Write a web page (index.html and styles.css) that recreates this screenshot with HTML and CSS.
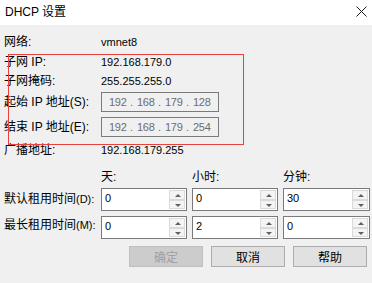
FILE: index.html
```html
<!DOCTYPE html>
<html lang="zh-CN">
<head>
<meta charset="utf-8">
<title>DHCP 设置</title>
<link rel="stylesheet" href="styles.css">
</head>
<body>
<div class="dialog">
  <div class="titlebar">
    <span class="title">DHCP 设置</span>
    <svg class="close" width="11" height="11" viewBox="0 0 11 11"><path d="M0.5 0.5 L10.5 10.5 M10.5 0.5 L0.5 10.5" stroke="#1a1a1a" stroke-width="1" fill="none"/></svg>
  </div>
  <div class="content">
    <div class="row r-net"><span class="label">网络:</span><span class="value">vmnet8</span></div>
    <div class="row r-ip"><span class="label">子网 IP:</span><span class="value">192.168.179.0</span></div>
    <div class="row r-mask"><span class="label">子网掩码:</span><span class="value">255.255.255.0</span></div>
    <div class="row r-start"><span class="label">起始 IP 地址(S):</span>
      <div class="ipbox"><span class="seg">192</span><span class="dot">.</span><span class="seg">168</span><span class="dot">.</span><span class="seg">179</span><span class="dot">.</span><span class="seg">128</span></div>
    </div>
    <div class="row r-end"><span class="label">结束 IP 地址(E):</span>
      <div class="ipbox"><span class="seg">192</span><span class="dot">.</span><span class="seg">168</span><span class="dot">.</span><span class="seg">179</span><span class="dot">.</span><span class="seg">254</span></div>
    </div>
    <div class="row r-bc"><span class="label">广播地址:</span><span class="value">192.168.179.255</span></div>

    <div class="lease">
      <span></span><span class="colhead">天:</span><span class="colhead">小时:</span><span class="colhead">分钟:</span>

      <span class="llabel">默认租用时间<span class="acc">(D):</span></span>
      <div class="spin"><span class="num">0</span><div class="arrows"><span class="up"></span><span class="down"></span></div></div>
      <div class="spin"><span class="num">0</span><div class="arrows"><span class="up"></span><span class="down"></span></div></div>
      <div class="spin"><span class="num">30</span><div class="arrows"><span class="up"></span><span class="down"></span></div></div>

      <span class="llabel">最长租用时间<span class="acc">(M):</span></span>
      <div class="spin"><span class="num">0</span><div class="arrows"><span class="up"></span><span class="down"></span></div></div>
      <div class="spin"><span class="num">2</span><div class="arrows"><span class="up"></span><span class="down"></span></div></div>
      <div class="spin"><span class="num">0</span><div class="arrows"><span class="up"></span><span class="down"></span></div></div>
    </div>

    <div class="buttons">
      <button class="btn disabled">确定</button>
      <button class="btn">取消</button>
      <button class="btn">帮助</button>
    </div>
  </div>
  <div class="highlight"></div>
</div>
</body>
</html>
```
FILE: styles.css
```css
* { box-sizing: border-box; }
html, body { margin: 0; padding: 0; }
body {
  width: 372px;
  height: 283px;
  background: #f0f0f0;
  font-family: "Liberation Sans", "Noto Sans CJK SC", sans-serif;
  font-size: 12px;
  color: #000;
  overflow: hidden;
}
.dialog { position: relative; width: 372px; height: 283px; }
.titlebar {
  height: 25px;
  background: #fff;
  display: flex;
  align-items: center;
  justify-content: space-between;
  padding: 0 5px 0 5px;
}
.title { font-size: 12px; line-height: 25px; color: #000; }
.close { margin-top: -2px; margin-right: 0; }

.content { padding: 7px 0 0 4px; }
.row { display: flex; align-items: center; height: 20px; }
.label { width: 97px; flex: none; line-height: 14px; }
.value { font-size: 11px; line-height: 14px; }
.r-ip { height: 19px; }
.r-mask { margin-bottom: 1px; }
.r-end { margin-top: 5px; }
.r-bc { margin-top: 3px; }

.ipbox {
  width: 118px;
  height: 20px;
  border: 1px solid #7a7a7a;
  background: #f0f0f0;
  display: flex;
  align-items: center;
  padding-left: 7px;
  color: #6d6d6d;
  font-size: 11px;
}
.seg { width: 17px; text-align: left; letter-spacing: -0.3px; }
.dot { width: 11px; text-align: center; }

.lease {
  margin-top: 7px;
  display: grid;
  grid-template-columns: 92px 86px 86px 87px;
  grid-template-rows: 20px 23px 23px;
  column-gap: 5px;
  row-gap: 0;
}
.colhead { line-height: 20px; align-self: center; }
.lease > :nth-child(n+5) { margin-top: 1px; }
.lease > :nth-child(n+9) { margin-top: 6px; }
.llabel { align-self: center; line-height: 14px; white-space: nowrap; }
.acc { font-size: 11px; }
.spin {
  height: 23px;
  border: 1px solid #7a7a7a;
  background: #fff;
  display: flex;
}
.num { flex: 1; font-size: 11px; padding: 3px 0 0 3px; line-height: 12px; }
.arrows {
  width: 16px;
  margin: 1px 1px 1px 0;
  display: flex;
  flex-direction: column;
}
.arrows span {
  flex: 1;
  border: 1px solid #dadada;
  background: #f4f4f4;
  position: relative;
}
.arrows span::after {
  content: "";
  position: absolute;
  left: 5px;
  top: 3px;
  border-left: 3px solid transparent;
  border-right: 3px solid transparent;
}
.arrows .up::after { border-bottom: 3px solid #606060; }
.arrows .down::after { border-top: 3px solid #606060; }

.buttons {
  margin-top: 13px;
  display: flex;
  justify-content: flex-end;
  gap: 8px;
  padding-right: 5px;
}
.btn {
  width: 74px;
  height: 21px;
  border: 1px solid #adadad;
  background: #e1e1e1;
  font-family: "Noto Sans CJK SC", sans-serif;
  font-size: 12px;
  line-height: 17px;
  color: #000;
  padding: 0;
}
.btn.disabled {
  background: #cccccc;
  border-color: #bfbfbf;
  color: #a0a0a0;
}

.highlight {
  position: absolute;
  left: 8px;
  top: 54px;
  width: 236px;
  height: 91px;
  border: 1px solid #e8413e;
  pointer-events: none;
}
```
